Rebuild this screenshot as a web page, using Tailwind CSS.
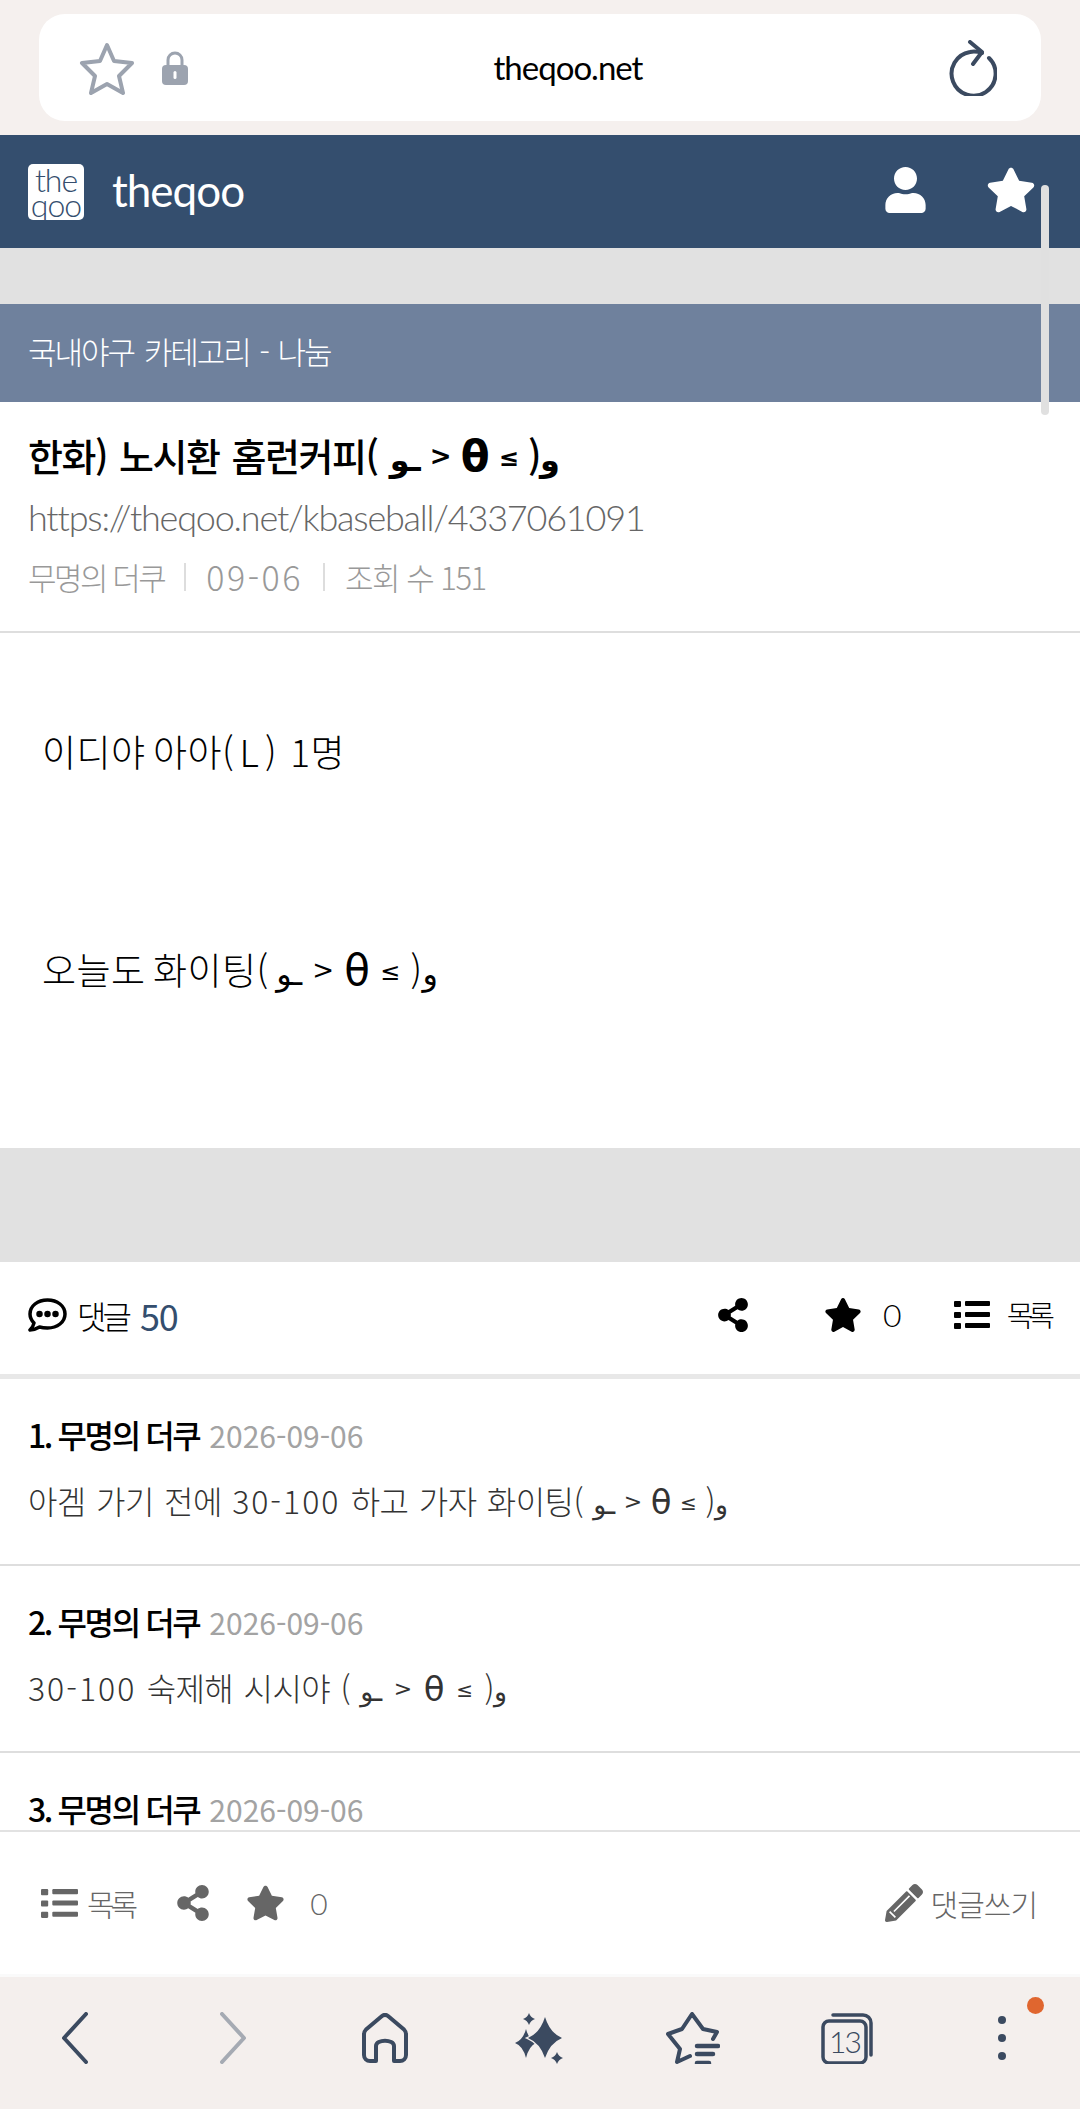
<!DOCTYPE html>
<html lang="ko">
<head>
<meta charset="UTF-8">
<meta name="viewport" content="width=device-width, initial-scale=1.0">
<title>theqoo</title>
<script src="https://cdn.jsdelivr.net/npm/@tailwindcss/browser@4"></script>
</head>
<body class="bg-white font-['Noto_Sans_CJK_KR','Noto_Sans',sans-serif] font-light">
<div class="relative w-[1080px] h-[2109px] overflow-hidden flex flex-col">

  <!-- Browser address bar -->
  <div class="h-[135px] shrink-0 bg-[#f5f0ee] px-[39px] pt-[14px]">
    <div class="relative h-[107px] bg-white rounded-[26px] flex items-center pl-[40px] pr-[44px]">
      <svg class="w-[56px] h-[54px]" viewBox="0 0 56 54" fill="none" stroke="#9ca3af" stroke-width="4" stroke-linejoin="round"><path d="M28 4l7 16 18 2-13 13 4 17-16-9-16 9 4-17L3 22l18-2z"/></svg>
      <svg class="w-[26px] h-[34px] ml-[27px]" viewBox="0 0 26 34"><path d="M6 15V9a7 7 0 0 1 14 0v6" fill="none" stroke="#9ca3af" stroke-width="3"/><rect x="0" y="14" width="26" height="20" rx="4" fill="#9ca3af"/><rect x="11.5" y="20" width="3" height="8" rx="1.5" fill="#fff"/></svg>
      <span class="absolute left-0 right-0 pl-[56px] text-center text-[33px] font-normal text-black tracking-[-1px] font-['Lato',sans-serif]">theqoo.net</span>
      <svg class="ml-auto w-[50px] h-[56px]" viewBox="0 0 50 56" fill="none" stroke="#3b4a60" stroke-width="4" stroke-linecap="round" stroke-linejoin="round"><path d="M42 18a22 22 0 1 1-19-6c5-1 9 0 12 1"/><path d="M23 2l12 10-9 12"/></svg>
    </div>
  </div>

  <!-- Site header -->
  <header class="relative h-[113px] shrink-0 bg-[#344e6e] flex items-center pl-[28px] pr-[44px]">
    <div class="w-[56px] h-[56px] bg-white rounded-[5px] flex flex-col items-center justify-center text-[#344e6e] text-[32px] leading-[25px] font-['Lato',sans-serif] font-light tracking-[-1px]"><span>the</span><span>qoo</span></div>
    <span class="ml-[28px] -mt-[3px] text-[44px] text-white font-normal tracking-[-1px] font-['Lato',sans-serif]">theqoo</span>
    <svg class="ml-auto -mt-[4px] w-[41px] h-[46px]" viewBox="0 0 448 512" fill="#fff"><path d="M224 256c70.7 0 128-57.3 128-128S294.7 0 224 0 96 57.3 96 128s57.3 128 128 128zm89.6 32h-16.7c-22.2 10.2-46.9 16-72.9 16s-50.6-5.8-72.9-16h-16.7C60.2 288 0 348.2 0 422.4V464c0 26.5 21.5 48 48 48h352c26.5 0 48-21.5 48-48v-41.6c0-74.2-60.2-134.4-134.4-134.4z"/></svg>
    <svg class="ml-[60px] -mt-[4px] w-[50px] h-[46px]" viewBox="0 0 576 512" fill="#fff"><path d="M259.3 17.8L194 150.2 47.9 171.5c-26.2 3.8-36.7 36.1-17.7 54.6l105.7 103-25 145.5c-4.5 26.3 23.2 46 46.4 33.7L288 439.6l130.7 68.7c23.2 12.2 50.9-7.4 46.4-33.7l-25-145.5 105.7-103c19-18.5 8.5-50.8-17.7-54.6L382 150.2 316.7 17.8c-11.7-23.6-45.6-23.9-57.4 0z"/></svg>
  </header>

  <div class="h-[56px] shrink-0 bg-[#e1e1e1]"></div>

  <!-- Category -->
  <div class="h-[98px] shrink-0 bg-[#6f819d] flex items-center px-[28px] pb-[4px] text-[31px] text-white tracking-[-2px] [word-spacing:3px]">국내야구 카테고리 - 나눔</div>

  <!-- Article head -->
  <div class="h-[231px] shrink-0 border-b-2 border-[#dedede] px-[28px] pt-[28px]">
    <h1 class="text-[38px] leading-[50px] font-medium text-black tracking-[-1.5px] [word-spacing:3px]">한화) 노시환 홈런커피( <span class="font-['DejaVu_Sans',sans-serif] font-bold tracking-normal text-[32px] [word-spacing:-2px]">ـو <span class="[vertical-align:0.25em] text-[26px]">&gt;</span> <span class="text-[42px] leading-none">θ</span> <span class="[vertical-align:0.2em] text-[24px]">≤</span> </span>)<span class="font-['DejaVu_Sans',sans-serif] font-bold text-[32px]">و</span></h1>
    <p class="mt-[7px] text-[36px] leading-[50px] text-[#666] tracking-[-1.2px] font-['Lato',sans-serif] font-light">https://theqoo.net/kbaseball/4337061091</p>
    <div class="mt-[10px] flex items-center text-[31px] leading-[50px] text-[#999] tracking-[-2.5px]">
      <span>무명의 더쿠</span>
      <span class="mx-[20px] w-[2px] h-[28px] bg-[#ddd]"></span>
      <span class="text-[34px] tracking-[2.5px]">09-06</span>
      <span class="mx-[20px] w-[2px] h-[28px] bg-[#ddd]"></span>
      <span class="tracking-[-1.5px]">조회 수 151</span>
    </div>
  </div>

  <!-- Article body -->
  <div class="h-[515px] shrink-0 px-[42px] pt-[88px] text-[37px] leading-[60px] text-black tracking-[0.4px] [word-spacing:-3px]">
    <p>이디야 아아<span class="tracking-[6px]">(L)</span> 1명</p>
    <p class="mt-[158px]">오늘도 화이팅( <span class="font-['DejaVu_Sans',sans-serif] font-normal tracking-normal text-[32px] [word-spacing:0px]">ـو <span class="[vertical-align:0.25em] text-[26px]">&gt;</span> <span class="text-[42px] leading-none">θ</span> <span class="[vertical-align:0.2em] text-[24px]">≤</span> </span>)<span class="font-['DejaVu_Sans',sans-serif] font-normal text-[32px]">و</span></p>
  </div>

  <div class="h-[114px] shrink-0 bg-[#e1e1e1]"></div>

  <!-- Comment toolbar -->
  <div class="h-[112px] shrink-0 flex items-center pl-[28px] pr-[30px] pb-[6px] text-[32px] text-black">
    <svg class="w-[39px] h-[34px]" viewBox="0 0 39 34" fill="none" stroke="#000" stroke-width="3.5"><path d="M19.5 2C9.5 2 2 8 2 16c0 3.5 1.500 6.500 4 9-.5 2.500-2 5-4 7 4 0 7-1.500 9.500-3 2.500.7 5 1 8 1 10 0 17.500-6 17.500-14S29.500 2 19.500 2z" stroke-linejoin="round"/><circle cx="11.500" cy="16" r="1.500" fill="#000"/><circle cx="19.500" cy="16" r="1.500" fill="#000"/><circle cx="27.500" cy="16" r="1.500" fill="#000"/></svg>
    <span class="ml-[10px] tracking-[-4px]">댓글</span>
    <span class="ml-[12px] text-[36px] font-normal text-[#344e6e] tracking-[-1px]">50</span>
    <svg class="ml-auto w-[32px] h-[34px]" viewBox="0 0 448 512" fill="#000"><path d="M352 320c-22.600 0-43.400 7.800-59.800 20.900l-102.500-64.100a96.600 96.600 0 0 0 0-41.700l102.500-64.100C308.600 184.200 329.400 192 352 192c53 0 96-43 96-96S405 0 352 0s-96 43-96 96c0 7.200.8 14.100 2.300 20.900L155.800 181C139.400 167.800 118.600 160 96 160c-53 0-96 43-96 96s43 96 96 96c22.600 0 43.400-7.800 59.800-20.900l102.500 64.100A96.300 96.300 0 0 0 256 416c0 53 43 96 96 96s96-43 96-96-43-96-96-96z"/></svg>
    <svg class="ml-[75px] w-[38px] h-[34px]" viewBox="0 0 576 512" fill="#000"><path d="M259.3 17.8L194 150.2 47.9 171.5c-26.2 3.8-36.7 36.1-17.7 54.6l105.7 103-25 145.500c-4.500 26.300 23.200 46 46.400 33.700L288 439.600l130.700 68.700c23.200 12.200 50.900-7.400 46.400-33.700l-25-145.500 105.700-103c19-18.500 8.500-50.800-17.700-54.600L382 150.200 316.700 17.800c-11.700-23.600-45.600-23.900-57.400 0z"/></svg>
    <span class="ml-[21px] font-['Lato',sans-serif] font-light">0</span>
    <svg class="ml-[52px] w-[36px] h-[28px]" viewBox="0 0 36 28" fill="#000"><rect y="0" width="7" height="6" rx="1"/><rect y="11" width="7" height="6" rx="1"/><rect y="22" width="7" height="6" rx="1"/><rect x="11" y="0" width="25" height="5" rx="1"/><rect x="11" y="11" width="25" height="5" rx="1"/><rect x="11" y="22" width="25" height="5" rx="1"/></svg>
    <span class="ml-[17px] text-[29px] tracking-[-5px]">목록</span>
  </div>
  <div class="h-[5px] shrink-0 bg-[#e8e8e8]"></div>

  <!-- Comments -->
  <div class="flex-1 overflow-hidden">
    <div class="h-[187px] border-b-2 border-[#dedede] px-[28px] pt-[30px]">
      <div class="flex items-baseline"><span class="text-[32px] leading-[50px] font-medium text-black tracking-[-2.4px]">1. 무명의 더쿠</span><span class="ml-[10px] text-[30px] font-normal text-[#a3a3a3] tracking-normal">2026-09-06</span></div>
      <p class="mt-[16px] text-[32px] leading-[50px] text-[#333] tracking-[-0.6px] [word-spacing:2px]">아겜 가기 전에 <span class="tracking-[2px]">30-100</span> 하고 가자 화이팅( <span class="font-['DejaVu_Sans',sans-serif] font-normal tracking-normal text-[27px] [word-spacing:0px]">ـو <span class="[vertical-align:0.25em] text-[22px]">&gt;</span> <span class="text-[34px] leading-none">θ</span> <span class="[vertical-align:0.2em] text-[20px]">≤</span> </span>)<span class="font-['DejaVu_Sans',sans-serif] font-normal text-[27px]">و</span></p>
    </div>
    <div class="h-[187px] border-b-2 border-[#dedede] px-[28px] pt-[30px]">
      <div class="flex items-baseline"><span class="text-[32px] leading-[50px] font-medium text-black tracking-[-2.4px]">2. 무명의 더쿠</span><span class="ml-[10px] text-[30px] font-normal text-[#a3a3a3] tracking-normal">2026-09-06</span></div>
      <p class="mt-[16px] text-[32px] leading-[50px] text-[#333] tracking-[-0.6px] [word-spacing:2px]"><span class="tracking-[2px]">30-100</span> 숙제해 시시야 ( <span class="font-['DejaVu_Sans',sans-serif] font-normal tracking-normal text-[27px] [word-spacing:3px]">ـو <span class="[vertical-align:0.25em] text-[22px]">&gt;</span> <span class="text-[34px] leading-none">θ</span> <span class="[vertical-align:0.2em] text-[20px]">≤</span> </span>)<span class="font-['DejaVu_Sans',sans-serif] font-normal text-[27px]">و</span></p>
    </div>
    <div class="px-[28px] pt-[30px]">
      <div class="flex items-baseline"><span class="text-[32px] leading-[50px] font-medium text-black tracking-[-2.4px]">3. 무명의 더쿠</span><span class="ml-[10px] text-[30px] font-normal text-[#a3a3a3] tracking-normal">2026-09-06</span></div>
    </div>
  </div>

  <!-- Bottom action bar -->
  <div class="h-[144px] shrink-0 border-t-2 border-[#e2e2e2] flex items-center pl-[41px] pr-[43px] text-[30px] text-[#666]">
    <svg class="w-[37px] h-[29px]" viewBox="0 0 36 28" fill="#666"><rect y="0" width="7" height="6" rx="1"/><rect y="11" width="7" height="6" rx="1"/><rect y="22" width="7" height="6" rx="1"/><rect x="11" y="0" width="25" height="5" rx="1"/><rect x="11" y="11" width="25" height="5" rx="1"/><rect x="11" y="22" width="25" height="5" rx="1"/></svg>
    <span class="ml-[9px] tracking-[-4px]">목록</span>
    <svg class="ml-[43px] w-[32px] h-[36px]" viewBox="0 0 448 512" fill="#666"><path d="M352 320c-22.600 0-43.400 7.800-59.800 20.900l-102.500-64.100a96.600 96.600 0 0 0 0-41.700l102.500-64.100C308.600 184.200 329.400 192 352 192c53 0 96-43 96-96S405 0 352 0s-96 43-96 96c0 7.200.8 14.100 2.300 20.900L155.800 181C139.400 167.800 118.600 160 96 160c-53 0-96 43-96 96s43 96 96 96c22.600 0 43.400-7.800 59.800-20.900l102.500 64.100A96.300 96.300 0 0 0 256 416c0 53 43 96 96 96s96-43 96-96-43-96-96-96z"/></svg>
    <svg class="ml-[37px] w-[39px] h-[36px]" viewBox="0 0 576 512" fill="#666"><path d="M259.300 17.800L194 150.200 47.900 171.500c-26.200 3.800-36.700 36.100-17.700 54.600l105.700 103-25 145.500c-4.500 26.300 23.200 46 46.400 33.700L288 439.600l130.700 68.700c23.200 12.200 50.900-7.400 46.400-33.700l-25-145.500 105.700-103c19-18.500 8.500-50.800-17.700-54.600L382 150.200 316.700 17.800c-11.700-23.600-45.600-23.900-57.400 0z"/></svg>
    <span class="ml-[25px] font-['Lato',sans-serif] font-light">0</span>
    <svg class="ml-auto w-[38px] h-[38px]" viewBox="0 0 512 512" fill="#666"><path d="M497.900 142.100l-46.100 46.100c-4.700 4.700-12.300 4.700-17 0l-111-111c-4.700-4.700-4.700-12.300 0-17l46.100-46.100c18.700-18.700 49.100-18.700 67.900 0l60.100 60.100c18.800 18.700 18.800 49.100 0 67.900zM284.200 99.800L21.600 362.400.4 483.900c-2.900 16.400 11.400 30.600 27.800 27.800l121.500-21.300 262.600-262.600c4.700-4.700 4.700-12.300 0-17l-111-111c-4.800-4.700-12.400-4.700-17.100 0z"/><path d="M62 372l78 78M120 370l210-210" fill="none" stroke="#fff" stroke-width="22"/></svg>
    <span class="ml-[8px] tracking-[-1px]">댓글쓰기</span>
  </div>

  <!-- Browser nav -->
  <nav class="relative h-[135px] shrink-0 bg-[#f4efed] border-t-[3px] border-[#fafafa] flex items-center pl-[61px] pb-[11px]">
    <svg class="w-[27px] h-[52px]" viewBox="0 0 27 52" fill="none" stroke="#3b4a60" stroke-width="4" stroke-linecap="round" stroke-linejoin="round"><path d="M25 2L3 26l22 24"/></svg>
    <svg class="ml-[132px] w-[27px] h-[52px]" viewBox="0 0 27 52" fill="none" stroke="#a5aab3" stroke-width="4" stroke-linecap="round" stroke-linejoin="round"><path d="M2 2l22 24L2 50"/></svg>
    <svg class="ml-[115px] w-[46px] h-[50px]" viewBox="0 0 46 50" fill="none" stroke="#3b4a60" stroke-width="4" stroke-linejoin="round"><path d="M14 48H8a6 6 0 0 1-6-6V21c0-2 .6-3 2-4.500L20 3c2-1.500 4-1.500 6 0l16 13.500c1.400 1.500 2 2.500 2 4.500v21a6 6 0 0 1-6 6h-6V33c0-7-18-7-18 0z"/></svg>
    <svg class="ml-[107px] w-[48px] h-[52px]" viewBox="0 0 48 52" fill="#3b4a60"><path d="M11 17Q14 28 21 31 14 34 11 46 8 34 0 31 8 28 11 17z"/><path d="M30 5Q35 21 47 26 35 31 30 46 25 31 13 26 25 21 30 5z" stroke="#f4efed" stroke-width="2.500" paint-order="stroke"/><path d="M14 1Q15.500 5.500 20 7 15.500 8.500 14 13 12.500 8.500 8 7 12.500 5.500 14 1z"/><path d="M42 40Q43.500 44.500 48 46 43.500 47.500 42 52 40.500 47.500 36 46 40.500 44.500 42 40z"/></svg>
    <svg class="ml-[102px] w-[55px] h-[52px]" viewBox="0 0 55 52" fill="none" stroke="#3b4a60" stroke-width="4" stroke-linecap="round" stroke-linejoin="round"><path d="M48 27l4-7-14-3L27 2 17 17 3 22 15 37 12 50 25 44"/><path d="M32 34h21M32 42h16M32 51h12" stroke-width="4.500"/></svg>
    <div class="relative ml-[101px] w-[52px] h-[52px]">
      <svg class="w-[52px] h-[52px]" viewBox="0 0 52 52" fill="none" stroke="#3b4a60" stroke-width="3.500"><rect x="2" y="9" width="43" height="42" rx="6"/><path d="M12 3h30a8 8 0 0 1 8 8v32" stroke-linecap="round"/></svg>
      <span class="absolute left-[2px] w-[43px] top-[9px] h-[42px] flex items-center justify-center text-[30px] text-[#3b4a60] tracking-[-2px] font-['Lato',sans-serif]">13</span>
    </div>
    <div class="ml-[125px] flex flex-col gap-[10px]">
      <span class="w-[8px] h-[8px] rounded-full bg-[#3b4a60]"></span>
      <span class="w-[8px] h-[8px] rounded-full bg-[#3b4a60]"></span>
      <span class="w-[8px] h-[8px] rounded-full bg-[#3b4a60]"></span>
    </div>
    <span class="absolute left-[1027px] top-[20px] w-[17px] h-[17px] rounded-full bg-[#e0662f]"></span>
  </nav>

  <!-- Scrollbar overlay -->
  <div class="absolute left-[1041px] top-[185px] w-[8px] h-[230px] rounded-full bg-[#e0e0e0]"></div>
</div>
</body>
</html>
